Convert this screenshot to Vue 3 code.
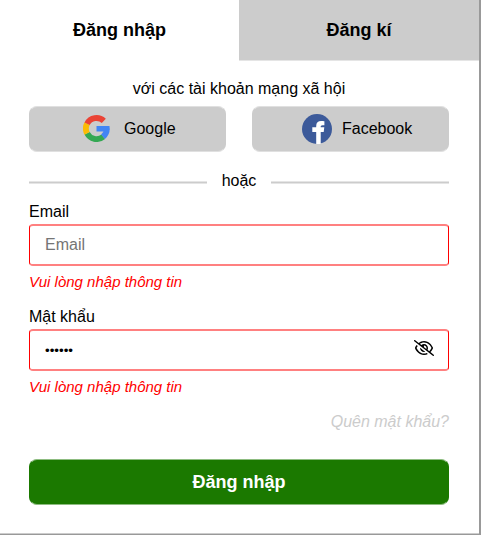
<script setup>
import { ref } from 'vue'

const email = ref('')
const password = ref('123456')
const showPassword = ref(false)
</script>

<template>
  <main class="card">
    <nav class="tabs">
      <button class="tab active" type="button">Đăng nhập</button>
      <button class="tab" type="button">Đăng kí</button>
    </nav>
    <form class="body" @submit.prevent>
      <p class="intro">với các tài khoản mạng xã hội</p>
      <div class="social">
        <button class="provider" type="button">
          <svg class="google" viewBox="0 0 48 48">
            <g fill="none" stroke-width="10.4">
              <path stroke="#34a853" d="M7.3 32.5A18.8 18.8 0 0 0 36 38.5" />
              <path stroke="#fbbc05" d="M7.3 15.3a18.8 18.8 0 0 0 0 17.4" />
              <path stroke="#ea4335" d="M37 10.5A18.8 18.8 0 0 0 7.3 15.5" />
              <path stroke="#4285f4" d="M35.6 38.8A18.8 18.8 0 0 0 42.3 24.5" />
            </g>
            <path fill="#4285f4" d="M24 19.7h23.1l.4 5.2-4 4.4H24z" />
          </svg>
          <span>Google</span>
        </button>
        <button class="provider facebook-button" type="button">
          <svg class="facebook" viewBox="0 0 30 30">
            <circle cx="15" cy="15" r="15" fill="#3c5a9a" />
            <path fill="#fff" d="M14.2 30V17.9h-3.9v-4.6h3.9v-1.4c0-3.2 1.8-5 5-5 1.4 0 2.6.1 3.2.3v4h-1.9c-1.4 0-1.8.7-1.8 1.9v.2h3.6l-.6 4.6h-3v12z" />
          </svg>
          <span>Facebook</span>
        </button>
      </div>
      <div class="divider">hoặc</div>

      <label class="label" for="email">Email</label>
      <input id="email" v-model="email" class="input" placeholder="Email">
      <p class="error">Vui lòng nhập thông tin</p>

      <label class="label" for="password">Mật khẩu</label>
      <div class="password">
        <input id="password" v-model="password" class="input secret" :type="showPassword ? 'text' : 'password'">
        <button class="toggle" type="button" aria-label="Hiện mật khẩu" @click="showPassword = !showPassword">
          <svg viewBox="0 0 640 512" width="20" height="16">
            <path d="M38.8 5.1C28.4-3.1 13.3-1.2 5.1 9.2S-1.2 34.7 9.2 42.9l592 464c10.4 8.2 25.5 6.3 33.7-4.1s6.3-25.5-4.1-33.7L525.6 386.7c39.6-40.6 66.4-86.1 79.9-118.4c3.3-7.9 3.3-16.7 0-24.6c-14.9-35.7-46.2-87.7-93-131.1C465.5 68.8 400.8 32 320 32c-68.2 0-125 26.3-169.3 60.8L38.8 5.1zm151 118.3C226 97.7 269.5 80 320 80c65.2 0 118.8 29.6 159.9 67.7C518.4 183.5 545 226 558.6 256c-12.6 28-36.6 66.8-70.9 100.9l-53.8-42.2c9.1-17.6 14.2-37.5 14.2-58.7c0-70.7-57.3-128-128-128c-32.2 0-61.7 11.9-84.2 31.5l-46.1-36.1zM394.9 284.2l-81.5-63.9c4.2-8.5 6.6-18.2 6.6-28.3c0-5.5-.7-10.9-2-16c.7 0 1.3 0 2 0c44.2 0 80 35.8 80 80c0 9.9-1.8 19.4-5.1 28.2zm9.4 130.3C378.8 425.4 350.7 432 320 432c-65.2 0-118.8-29.6-159.9-67.7C121.6 328.5 95 286 81.4 256c8.3-18.4 21.5-41.5 39.4-64.8L83.1 161.5C60.3 191.2 44 220.8 34.5 243.7c-3.3 7.9-3.3 16.7 0 24.6c14.9 35.7 46.2 87.7 93 131.1C174.5 443.2 239.2 480 320 480c47.8 0 89.9-12.9 126.2-32.5l-41.9-33zM192 256c0 70.7 57.3 128 128 128c13.3 0 26.1-2 38.2-5.8L302 334c-23.5-5.4-43.1-21.2-53.7-42.3l-56.1-44.2c-.2 2.8-.3 5.6-.3 8.5z" />
          </svg>
        </button>
      </div>
      <p class="error">Vui lòng nhập thông tin</p>

      <a class="forgot">Quên mật khẩu?</a>
      <button class="submit" type="submit">Đăng nhập</button>
    </form>
  </main>
</template>

<style>
body {
  margin: 0;
  overflow: hidden;
}
</style>

<style scoped>
* {
  box-sizing: border-box;
}

.card {
  width: 481px;
  height: 535px;
  border-right: 2px solid #999;
  border-bottom: 1px solid #999;
  background: #fff;
  box-shadow: inset 0 -1px #ccc;
  color: #000;
  font: 16px/18px "Liberation Sans", Arial, sans-serif;
}

button {
  margin: 0;
  border: 0;
  color: inherit;
  font: inherit;
}

.tabs {
  display: grid;
  grid-template-columns: 239px 240px;
  height: 61px;
}

.tab {
  padding: 0;
  border-bottom: 1px solid #e5e5e5;
  background: #ccc;
  font-size: 18px;
  font-weight: 700;
}

.tab.active {
  border-color: #fff;
  background: #fff;
}

.body {
  display: flex;
  flex-direction: column;
  padding: 19px 30px 0 29px;
}

.intro {
  margin: 0 0 8px;
  text-align: center;
}

.social {
  display: flex;
  justify-content: space-between;
}

.provider {
  display: flex;
  align-items: center;
  width: 197px;
  height: 46px;
  padding: 0 0 0 53px;
  border: 1px solid #ccc;
  border-top-color: #e0e0e0;
  border-bottom-color: #e0e0e0;
  border-radius: 8px;
  background: #ccc;
}

.facebook-button {
  padding-left: 49px;
}

.google {
  width: 27px;
  height: 27px;
  margin: 0 14px 2px 0;
}

.facebook {
  width: 30px;
  height: 30px;
  margin: 0 10px 1px 0;
}

.divider {
  display: flex;
  align-items: center;
  gap: 15px;
  height: 18px;
  margin: 20px 0 13px;
}

.divider::before,
.divider::after {
  flex: 1;
  height: 1px;
  margin-top: 3px;
  border: solid #e5e5e5;
  border-width: 1px 0;
  background: #ccc;
  content: "";
}

.label {
  height: 18px;
  margin-bottom: 3px;
}

.input {
  width: 100%;
  height: 42px;
  padding: 0 15px;
  border: solid #f00;
  border-width: 2px 1px;
  border-top-color: #ff8080;
  border-bottom-color: #ff8080;
  border-radius: 4px;
  outline: none;
  background: #fff;
  color: #000;
  font: inherit;
}

.input::placeholder {
  color: #757575;
}

.secret {
  padding-right: 48px;
  font-size: 13.333px;
}

.password {
  display: flex;
  position: relative;
}

.toggle {
  display: flex;
  position: absolute;
  top: 11px;
  right: 15px;
  padding: 0;
  background: none;
}

.error {
  height: 17px;
  margin: 7px 0 18px;
  color: #f00;
  font-size: 15px;
  font-style: italic;
  line-height: 17px;
}

.forgot {
  align-self: flex-end;
  height: 18px;
  margin-bottom: 28px;
  color: #ccc;
  font-style: italic;
}

.submit {
  height: 46px;
  border: 1px solid #1b7900;
  border-top-color: #8dbc80;
  border-bottom-color: #8dbc80;
  border-radius: 8px;
  background: #1b7900;
  color: #fff;
  font-size: 18px;
  font-weight: 700;
}
</style>
